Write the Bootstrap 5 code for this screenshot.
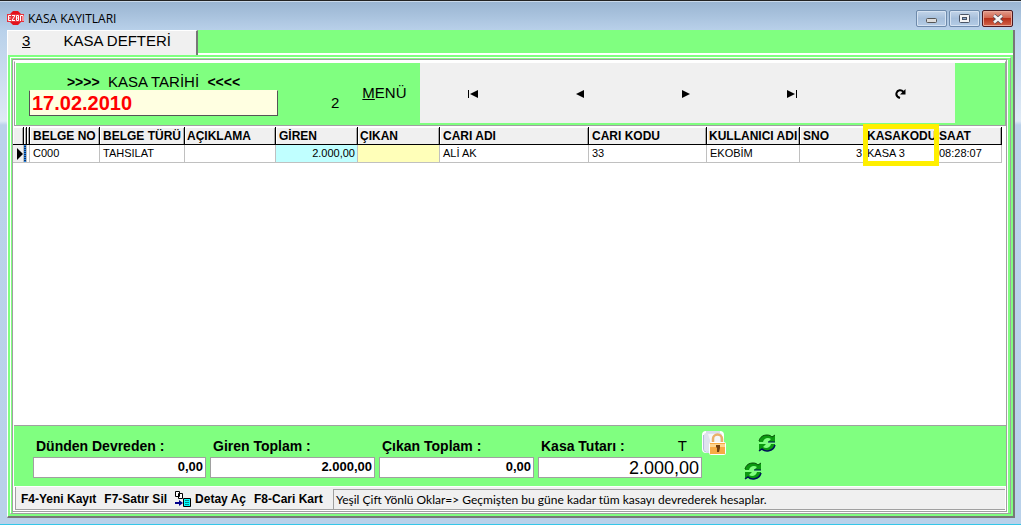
<!DOCTYPE html>
<html lang="tr">
<head>
<meta charset="utf-8">
<meta name="viewport" content="width=device-width, initial-scale=1">
<title>KASA KAYITLARI</title>
<link href="https://cdn.jsdelivr.net/npm/bootstrap@5.3.0/dist/css/bootstrap.min.css" rel="stylesheet">
<style>
  :root { --green: #80ff80; --face: #f0f0f0; --edge: #a0a0a0; --frame: #b9d1ea; }
  body { font-family: "Liberation Sans", Arial, sans-serif; font-size: 12px; line-height: 16px; color: #000; background: var(--frame); }
  button { color: inherit; }
  .win { background: linear-gradient(#99b4d1 0, var(--frame) 30px, #dfeaf6 120px, #bbd2eb 124px, var(--frame) 100%); border-top: 1px solid #222; border-bottom: 1px solid #35c6e8; }
  .titlebar { height: 29px; padding: 4px 8px 0 7px; border-top: 1px solid #c9d9ea; font: 12px/18px "Open Sans", "Noto Sans", sans-serif; }
  .caps { column-gap: 2px; }
  .cap { width: 31px; height: 17px; padding: 0; border: 1px solid #6d8aab; border-radius: 2px; background: linear-gradient(#c3d5e9, #a6bfdb 50%, #b4cce6); box-shadow: inset 0 0 0 1px #d5e3f2; }
  .cap.close-cap { border-color: #4b1820; background: linear-gradient(#e29c8c, #d0634c 48%, #b7301a 50%, #d2644a); box-shadow: inset 0 0 0 1px #e9a898; }
  .client { margin: 0 6px 6px 7px; background: var(--green); border-left: 1px solid #fff; border-right: 2px solid #777; border-bottom: 2px solid #777; }
  .tabs { height: 25px; border-bottom: 2px solid #fff; }
  .tab { width: 190px; height: 25px; border: 0; border-top: 1px solid #fff; border-right: 2px solid #777; background: var(--face); font-size: 15px; line-height: 20px; padding: 0 25px 0 10px; }
  .ring1 { margin: 2px; border: 1px solid #fff; border-right-color: var(--edge); border-bottom-color: var(--edge); padding: 1px 3px 1px 1px; }
  .ring2 { border: 1px solid var(--edge); box-shadow: 1px 1px 0 #fff; background: #fff; }
  .head { height: 65px; margin: 1px 0 1px 1px; border: 1px solid var(--edge); border-top-color: #fff; background: var(--green); box-shadow: inset 1px 1px 0 #fff; }
  .date-cell { width: 249px; margin-left: 14px; padding-top: 12px; font-size: 15px; }
  .date-cell b { font-size: 14px; }
  .date-input { width: 100%; height: 26px; border: 1px solid #555; border-top-color: #ffffe1; background: #ffffe1; color: #f00; font-size: 20px; font-weight: 700; line-height: 22px; padding: 0 2px; }
  .big-text { font-size: 15px; line-height: 20px; }
  .two { margin-left: 53px; padding-bottom: 12px; }
  .menu-link { margin-left: 23px; padding-top: 21px; }
  .navbtns { flex: 0 1 535px; margin: 1px 0 2px 13px; background: var(--face); }
  .navbtns button { border: 0; background: none; padding: 0; }
  .grid-tbl { width: calc(100% - 4px); table-layout: fixed; border-collapse: separate; border-spacing: 0; font-size: 11px; white-space: nowrap; }
  .grid-tbl th { height: 18px; padding: 0 3px; font-size: 12px; line-height: 16px; background: var(--face); border-right: 1px solid #000; border-bottom: 1px solid #000; box-shadow: inset 1px 1px 0 #fff, inset -1px 0 0 #aaa; }
  .grid-tbl td { height: 18px; padding: 0 3px; line-height: 17px; border-right: 1px solid #c0c0c0; border-bottom: 1px solid #c0c0c0; }
  .grid-tbl td.picked { background: repeating-linear-gradient(#2b86e8 0 1px, #05346e 1px 2px); }
  .grid-tbl td.num { padding-right: 2px; }
  .grid-tbl .tight { padding-left: 2px; padding-right: 0; }
  .rowmark { background: var(--face); }
  .c-in { background: #c0ffff; } .c-out { background: #ffffb9; }
  .hl { position: absolute; z-index: 1; left: -2px; right: -3px; top: -3px; height: 42px; border: 5px solid #ffef00; pointer-events: none; }
  .foot { height: 61px; border-top: 1px solid var(--edge); padding: 12px 0 0 19px; margin-left: 1px; background: var(--green); }
  .foot label { font-size: 14px; font-weight: 700; line-height: 16px; margin: 0 0 3px 3px; white-space: nowrap; }
  .foot input { display: block; width: 100%; height: 21px; border: 1px solid var(--edge); background: #fff; font-size: 13px; font-weight: 700; text-align: right; padding: 0 2px 3px; }
  .foot input.total { font-size: 18px; font-weight: 400; padding: 2px 2px 0; }
  .foot button { border: 0; background: none; padding: 0; display: block; }
  .f1 { flex: 0 1 173px; } .f2 { flex: 0 1 165px; } .f3 { flex: 0 1 155px; } .f4 { flex: 0 1 164px; }
  .locks { margin-top: -7px; }
  .syncs { width: 32px; margin: -4px 0 0 18px; gap: 10px; }
  .t-mark { font-size: 15px; line-height: 16px; padding-right: 15px; }
  .statusbar { height: 23px; margin: 1px 1px 1px 2px; border-left: 1px solid var(--edge); border-bottom: 1px solid var(--edge); background: var(--face); }
  .cmds { width: 317px; padding-left: 5px; gap: 8px; padding-top: 1px; }
  .cmds button { border: 0; background: none; padding: 0; font-weight: 700; white-space: nowrap; }
  .hint { border-top: 1px solid var(--edge); border-left: 1px solid var(--edge); margin-top: 2px; padding-left: 2px; font: 12px/20px Lato, "Open Sans", sans-serif; }
</style>
</head>
<body>
<svg class="d-none" xmlns="http://www.w3.org/2000/svg">
  <symbol id="sync" viewBox="0 0 18 18">
    <path d="M1 7C2 3 5 1 9 1c3 0 4 1 5 2l3-2v7h-7l3-3C10 3 6 4 5 8H1z" fill="#0b9a10"/>
    <path d="M1 7C2 3 5 1 9 1c3 0 4 1 5 2l3-2" fill="none" stroke="#064a06"/>
    <path d="M10 8h7" stroke="#00105c"/>
    <path d="M17 11c-1 4-4 6-8 6-3 0-4-1-5-2l-3 2v-7h7l-3 3c3 2 7 1 8-3h4z" fill="#0b9a10"/>
    <path d="M1 17l3-2c3 3 11 3 13-4" fill="none" stroke="#00105c" stroke-width="1.5"/>
  </symbol>
</svg>
<div class="win d-flex flex-column min-vh-100">
  <header class="titlebar d-flex align-items-start">
    <svg class="mt-1" width="17" height="16" viewBox="0 0 17 16"><path d="M6 1h5l3 3v8l-3 3H6l-3-3V4z" fill="#e3121a"/><path d="M0 4h17v8H0z" fill="#e8313a"/><path d="M4 5.500H1.500v5H4M1.500 8h2M5 5.500h3l-3 5h3M9.500 5.500h2v5h-2zM9.500 8h2M13.500 11V5.500h2.500V11" fill="none" stroke="#fff"/></svg>
    <span class="ms-1 mt-1">KASA KAYITLARI</span>
    <div class="caps d-flex ms-auto mt-1">
      <button class="cap d-flex align-items-center justify-content-center" aria-label="Küçült"><svg width="11" height="15" viewBox="0 0 11 15"><rect x=".5" y="7.500" width="10" height="4" rx="1" fill="#ddd" stroke="#555"/></svg></button>
      <button class="cap d-flex align-items-center justify-content-center" aria-label="Büyüt"><svg width="11" height="9" viewBox="0 0 11 9"><rect x=".5" y=".5" width="10" height="8" rx="1" fill="#f4f4f4" stroke="#4a5566"/><rect x="3.500" y="3.500" width="4" height="2" fill="#8aa8cc" stroke="#4a5566"/></svg></button>
      <button class="cap close-cap d-flex align-items-center justify-content-center" aria-label="Kapat"><svg width="12" height="10" viewBox="0 0 12 10"><path d="M2 1.500l8 7M10 1.500l-8 7" stroke="#534b58" stroke-width="4"/><path d="M2 1.500l8 7M10 1.500l-8 7" stroke="#f4f4f4" stroke-width="2.500"/></svg></button>
    </div>
  </header>

  <main class="client flex-grow-1 d-flex flex-column">
    <div class="tabs"><button class="tab d-flex justify-content-between"><u class="ps-1">3</u><span>KASA DEFTERİ</span></button></div>
    <div class="ring1 flex-grow-1 d-flex flex-column">
      <div class="ring2 flex-grow-1 d-flex flex-column">
        <section class="head d-flex">
          <div class="date-cell">
            <label for="tarih" class="d-block text-center"><b>&gt;&gt;&gt;&gt;</b>&nbsp; KASA TARİHİ &nbsp;<b>&lt;&lt;&lt;&lt;</b></label>
            <input id="tarih" class="date-input" value="17.02.2010">
          </div>
          <span class="big-text two align-self-end">2</span>
          <a href="#" class="big-text menu-link text-reset text-decoration-none"><u>M</u>ENÜ</a>
          <div class="navbtns d-flex">
            <button class="flex-fill" aria-label="İlk"><svg width="11" height="8" viewBox="0 0 11 8"><path d="M0 0h1v8H0zM2 4l8-4v8z"/></svg></button>
            <button class="flex-fill" aria-label="Önceki"><svg width="9" height="8" viewBox="0 0 9 8"><path d="M0 4l8-4v8z"/></svg></button>
            <button class="flex-fill" aria-label="Sonraki"><svg width="9" height="8" viewBox="0 0 9 8"><path d="M8 4L0 0v8z"/></svg></button>
            <button class="flex-fill" aria-label="Son"><svg width="11" height="8" viewBox="0 0 11 8"><path d="M8 4L0 0v8zM9 0h1v8H9z"/></svg></button>
            <button class="flex-fill" aria-label="Yenile"><svg width="11" height="11" viewBox="0 0 11 11"><path d="M5 10C2 9 1 7 1.500 5 2.500 2 6 1 8.500 4" fill="none" stroke="#000" stroke-width="2"/><path d="M10.500 1v5.500H5z"/></svg></button>
          </div>
        </section>

        <div class="flex-grow-1">
          <table class="grid-tbl">
            <colgroup><col style="width:11px"><col style="width:3px"><col style="width:3px"><col style="width:70px"><col style="width:85px"><col style="width:91px"><col style="width:82px"><col style="width:82px"><col><col style="width:118px"><col style="width:93px"><col style="width:65px"><col style="width:72px"><col style="width:65px"></colgroup>
            <thead><tr><th class="p-0"></th><th class="p-0"></th><th class="p-0"></th><th>BELGE NO</th><th>BELGE TÜRÜ</th><th class="tight">AÇIKLAMA</th><th>GİREN</th><th class="tight">ÇIKAN</th><th>CARI ADI</th><th>CARI KODU</th><th class="tight">KULLANICI ADI</th><th>SNO</th><th class="position-relative tight">KASAKODU<span class="hl"></span></th><th class="tight">SAAT</th></tr></thead>
            <tbody><tr><td class="rowmark p-0"><svg class="d-block ms-1" width="6" height="12" viewBox="0 0 6 12"><path d="M0 0l6 6-6 6z"/></svg></td><td class="picked p-0"></td><td class="p-0"></td><td>C000</td><td>TAHSILAT</td><td></td><td class="c-in num text-end">2.000,00</td><td class="c-out"></td><td>ALİ AK</td><td>33</td><td>EKOBİM</td><td class="num text-end">3</td><td class="tight">KASA 3</td><td class="tight">08:28:07</td></tr></tbody>
          </table>
        </div>

        <section class="foot d-flex">
          <div class="f1 me-1"><label class="d-block" for="dun">Dünden Devreden :</label><input id="dun" value="0,00"></div>
          <div class="f2 me-1"><label class="d-block" for="gir">Giren Toplam :</label><input id="gir" value="2.000,00"></div>
          <div class="f3 me-1"><label class="d-block" for="cik">Çıkan Toplam :</label><input id="cik" value="0,00"></div>
          <div class="f4"><div class="d-flex justify-content-between"><label for="kasa">Kasa Tutarı :</label><span class="t-mark">T</span></div><input id="kasa" class="total" value="2.000,00"></div>
          <div class="locks">
            <button aria-label="Kilit"><svg class="d-block" width="24" height="24" viewBox="0 0 24 24"><rect x="1" y="1" width="20" height="20" rx="3" fill="#dfe3ee" stroke="#fff" stroke-width="2"/><path d="M1.500 4v14q0 3 3 3H8M4 1h14" stroke="#b5b9dc" fill="none"/><path d="M6 3h12v18H8V9z" fill="#f5f6fa"/><path d="M11 12V8a4 4 0 0 1 9 0v4" fill="none" stroke="#e9b06a" stroke-width="2.500"/><rect x="7.500" y="11.500" width="16" height="12" rx="1" fill="#f7ab45" stroke="#fff"/><path d="M8 13h15v3H8z" fill="#ffd48d"/><path d="M14 14h4v3l-1 4h-2v-4l-1-1z" fill="#74410f"/></svg></button>
          </div>
          <div class="syncs d-flex flex-column">
            <button class="align-self-end" aria-label="Devret"><svg class="d-block" width="18" height="18"><use href="#sync"/></svg></button>
            <button class="align-self-start" aria-label="Hesapla"><svg class="d-block" width="18" height="18"><use href="#sync"/></svg></button>
          </div>
        </section>

        <footer class="statusbar d-flex">
          <div class="cmds d-flex align-items-center">
            <button>F4-Yeni Kayıt</button><button>F7-Satır Sil</button>
            <button class="d-flex align-items-center"><svg class="me-1" width="16" height="16" viewBox="0 0 16 16"><path d="M.5.500h4v5h-4zM3.500 2.500h4v5h-4z" fill="#fff" stroke="#000"/><path d="M0 12h5" stroke="#00008b" stroke-width="2"/><path d="M4 9l4 3-4 3z" fill="#00008b"/><path d="M8.500 7.500h7v8h-7z" fill="#0ff" stroke="#000"/><path d="M10 9.500h4M10 11.500h4M10 13.500h4" stroke="#088"/></svg>Detay Aç</button>
            <button>F8-Cari Kart</button>
          </div>
          <div class="hint flex-grow-1">Yeşil Çift Yönlü Oklar=&gt; Geçmişten bu güne kadar tüm kasayı devrederek hesaplar.</div>
        </footer>
      </div>
    </div>
  </main>
</div>
<script src="https://cdn.jsdelivr.net/npm/bootstrap@5.3.0/dist/js/bootstrap.bundle.min.js"></script>
</body>
</html>
